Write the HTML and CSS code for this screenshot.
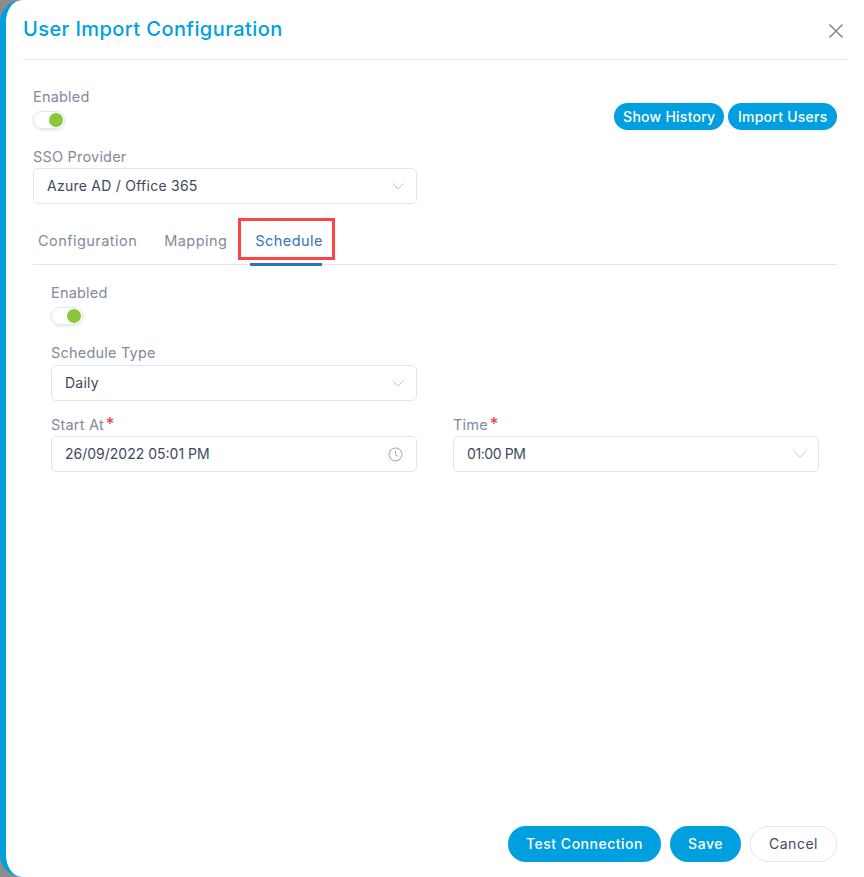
FILE: index.html
```html
<!DOCTYPE html>
<html lang="en">
<head>
<meta charset="utf-8">
<title>User Import Configuration</title>
<link rel="stylesheet" href="styles.css">
</head>
<body>
<div class="dialog">
  <header class="head">
    <h1 class="title">User Import Configuration</h1>
    <svg class="close" width="16" height="16" viewBox="0 0 16 16"><path d="M1.500 1.500 14.500 14.500M14.500 1.500 1.500 14.500" fill="none" stroke="#7b8799" stroke-width="1.500"/></svg>
  </header>
  <div class="body">
    <div class="top-row">
      <div class="field">
        <div class="label">Enabled</div>
        <div class="toggle"><span class="knob"></span></div>
      </div>
      <div class="top-actions">
        <button class="pill">Show History</button>
        <button class="pill">Import Users</button>
      </div>
    </div>
    <div class="field sso">
      <div class="label">SSO Provider</div>
      <div class="input">
        <span class="value">Azure AD / Office 365</span>
        <svg class="chev" width="12" height="7" viewBox="0 0 12 7"><path d="M.5.5 6 6l5.500-5.500" fill="none" stroke="#bcc6d6"/></svg>
      </div>
    </div>
    <nav class="tabs">
      <span class="tab">Configuration</span>
      <span class="tab">Mapping</span>
      <span class="tab active">Schedule<span class="highlight"></span></span>
    </nav>
    <section class="panel">
      <div class="field">
        <div class="label">Enabled</div>
        <div class="toggle"><span class="knob"></span></div>
      </div>
      <div class="field type">
        <div class="label">Schedule Type</div>
        <div class="input half">
          <span class="value">Daily</span>
          <svg class="chev" width="12" height="7" viewBox="0 0 12 7"><path d="M.5.5 6 6l5.500-5.500" fill="none" stroke="#bcc6d6"/></svg>
        </div>
      </div>
      <div class="grid">
        <div class="field">
          <div class="label">Start At<span class="req">*</span></div>
          <div class="input">
            <span>26/09/2022 05:01 PM</span>
            <svg class="clock" width="15" height="15" viewBox="0 0 15 15"><circle cx="7.500" cy="7.500" r="6.500" fill="none" stroke="#9aa5b5"/><path d="M7.500 3.800v4l2.500 1.700" fill="none" stroke="#9aa5b5"/></svg>
          </div>
        </div>
        <div class="field">
          <div class="label">Time<span class="req">*</span></div>
          <div class="input">
            <span class="time">01:00 PM</span>
            <svg class="chev" width="12" height="7" viewBox="0 0 12 7"><path d="M.5.5 6 6l5.500-5.500" fill="none" stroke="#bcc6d6"/></svg>
          </div>
        </div>
      </div>
    </section>
  </div>
  <footer class="foot">
    <button class="btn primary">Test Connection</button>
    <button class="btn primary save">Save</button>
    <button class="btn ghost">Cancel</button>
  </footer>
</div>
</body>
</html>
```

FILE: styles.css
```css
* { box-sizing: border-box; }
html, body { height: 100%; }
body {
  margin: 0;
  background: #8c8c8c;
  font-family: Inter, "Noto Sans", sans-serif;
  overflow: hidden;
}
button { font-family: inherit; cursor: pointer; }
.dialog {
  width: 864px;
  height: 877px;
  background: #fff;
  border-left: 6px solid #009fdf;
  border-radius: 22px 0 0 22px;
  display: flex;
  flex-direction: column;
  padding: 0 27px 0 17px;
}
.head {
  height: 60px;
  flex: none;
  margin-right: -10px;
  padding: 0 3px 2px 0;
  border-bottom: 1px solid #e0e4ec;
  display: flex;
  align-items: center;
  justify-content: space-between;
}
.title {
  margin: 0;
  font-size: 20px;
  font-weight: 500;
  letter-spacing: .42px;
  color: #009fdf;
}
.close { margin-top: 4px; }
.body {
  flex: 1;
  padding: 28px 0 0 10px;
}
.top-row {
  display: flex;
  justify-content: space-between;
  align-items: flex-start;
}
.label {
  font-size: 14.500px;
  line-height: 18px;
  letter-spacing: .2px;
  color: #808b9b;
}
.toggle {
  width: 32px;
  height: 18px;
  margin-top: 5px;
  border: 1px solid #e3e7ef;
  border-radius: 9px;
  box-shadow: 0 1px 3px rgba(0,0,0,.12);
  position: relative;
}
.knob {
  position: absolute;
  right: 1px;
  top: 1px;
  width: 14px;
  height: 14px;
  border-radius: 50%;
  background: #8cc63f;
}
.top-actions {
  display: flex;
  gap: 4px;
  margin-top: 15px;
}
.pill {
  height: 27px;
  padding: 0 9px 1px;
  border: 0;
  border-radius: 14px;
  background: #009fdf;
  color: #fff;
  font-size: 14px;
  font-weight: 500;
  letter-spacing: .25px;
}
.pill + .pill { padding: 0 9.500px 1px; }
.sso { margin-top: 18px; }
.sso .input { width: 384px; }
.input {
  height: 36px;
  margin-top: 2px;
  border: 1px solid #e0e5ee;
  border-radius: 5px;
  padding: 0 12px 2px 13px;
  display: flex;
  align-items: center;
  justify-content: space-between;
  color: #3c4a5c;
  font-size: 14px;
}
.value { letter-spacing: .25px; }
.time { letter-spacing: -.4px; }
.chev, .clock { margin-top: 2px; }
.clock { margin-right: 1px; }
.half { width: 366px; }
.tabs {
  margin-top: 19px;
  height: 42px;
  border-bottom: 1px solid #e0e4ec;
  display: flex;
  padding-left: 5px;
}
.tab {
  font-size: 14.500px;
  letter-spacing: .45px;
  color: #808b9b;
  padding-top: 9px;
  margin-right: 27px;
  position: relative;
}
.tab.active { color: #2e75bd; margin-left: 1px; }
.tab.active::after {
  content: "";
  position: absolute;
  left: -5px;
  right: 1px;
  bottom: -2px;
  height: 3px;
  background: #2e75bd;
}
.highlight {
  position: absolute;
  left: -17px;
  right: -12px;
  top: -5px;
  height: 42px;
  border: 3px solid #fb4545;
}
.panel { padding: 19px 18px 0 18px; }
.type { margin-top: 19px; }
.type .input { margin-top: 3px; }
.grid {
  display: grid;
  grid-template-columns: 366px 366px;
  column-gap: 36px;
  margin-top: 15px;
}
.req {
  color: #e53935;
  margin-left: 2px;
  font-size: 17px;
  line-height: 0;
}
.foot {
  flex: none;
  height: 51px;
  display: flex;
  justify-content: flex-end;
  align-items: flex-start;
  gap: 9px;
}
.btn {
  height: 36px;
  padding-bottom: 3px;
  border-radius: 18px;
  font-size: 14px;
  font-weight: 500;
  letter-spacing: .5px;
}
.primary {
  border: 0;
  width: 153px;
  background: #009fdf;
  color: #fff;
}
.save { width: 71px; }
.ghost {
  width: 87px;
  background: #fff;
  border: 1px solid #e0e5ee;
  color: #3c4a5c;
  font-weight: 400;
}
```
